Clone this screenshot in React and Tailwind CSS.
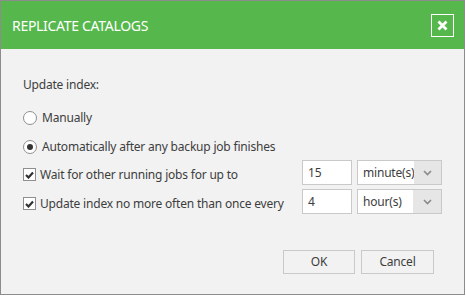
import React from "react";

function Radio({ checked }) {
  return (
    <span className="w-[14px] h-[14px] rounded-full border border-[#8f8f8f] bg-white flex items-center justify-center shrink-0">
      {checked && <span className="w-[6px] h-[6px] rounded-full bg-[#333]" />}
    </span>
  );
}

function Check() {
  return (
    <span className="w-[13px] h-[13px] border border-[#8f8f8f] bg-white flex items-center justify-center shrink-0">
      <svg width="9" height="8" viewBox="0 0 9 8">
        <path d="M1 4 L3.5 6.5 L8 1.5" fill="none" stroke="#333" strokeWidth="2.2" />
      </svg>
    </span>
  );
}

function Select({ value }) {
  return (
    <div className="w-[85px] h-[25px] border border-[#c9c9c9] bg-white flex">
      <div className="flex-1 pl-[5px] flex items-center">{value}</div>
      <div className="w-[28px] bg-[#e6e6e6] flex items-center justify-center">
        <svg width="9" height="6" viewBox="0 0 9 6">
          <path d="M1 1 L4.5 4.5 L8 1" fill="none" stroke="#8a8a8a" strokeWidth="1.6" />
        </svg>
      </div>
    </div>
  );
}

export default function App() {
  return (
    <div className="w-[466px] h-[296px] bg-white" style={{ fontFamily: '"Noto Sans", sans-serif' }}>
      <div className="w-[465px] h-[295px] border border-[#8c8c8c] bg-[#f2f2f2] flex flex-col text-[12px] tracking-[-0.2px] text-[#3d3d3d]">
        <div className="h-[48px] bg-[#55b74c] flex items-center justify-between pl-[11px] pr-[10px]">
          <span className="text-white text-[14px] tracking-[-0.3px] pt-[1px]">REPLICATE CATALOGS</span>
          <div className="w-[23px] h-[23px] border-[1.5px] border-white flex items-center justify-center">
            <svg width="11" height="11" viewBox="0 0 11 11">
              <path d="M1.5 1.5 L9.5 9.5 M9.5 1.5 L1.5 9.5" stroke="white" strokeWidth="2.8" />
            </svg>
          </div>
        </div>
        <div className="flex-1 flex flex-col pl-[22px]">
          <div className="mt-[26px] h-[20px] flex items-center">Update index:</div>
          <div className="mt-[14px] h-[18px] flex items-center gap-[5px]">
            <Radio />
            <span>Manually</span>
          </div>
          <div className="mt-[11px] h-[18px] flex items-center gap-[5px]">
            <Radio checked />
            <span>Automatically after any backup job finishes</span>
          </div>
          <div className="mt-[4px] flex items-center">
            <div className="w-[279px] pt-[4px] flex items-center gap-[4px]">
              <Check />
              <span>Wait for other running jobs for up to</span>
            </div>
            <div className="w-[50px] h-[25px] border border-[#c9c9c9] bg-white flex items-center pl-[5px]">15</div>
            <div className="ml-[5px]"><Select value="minute(s)" /></div>
          </div>
          <div className="mt-[4px] flex items-center">
            <div className="w-[279px] pt-[4px] flex items-center gap-[4px]">
              <Check />
              <span>Update index no more often than once every</span>
            </div>
            <div className="w-[50px] h-[25px] border border-[#c9c9c9] bg-white flex items-center pl-[5px]">4</div>
            <div className="ml-[5px]"><Select value="hour(s)" /></div>
          </div>
          <div className="mt-[36px] flex justify-end gap-[6px] pr-[30px]">
            <div className="w-[72px] h-[24px] border border-[#c9c9c9] flex items-center justify-center">OK</div>
            <div className="w-[73px] h-[24px] border border-[#c9c9c9] flex items-center justify-center">Cancel</div>
          </div>
        </div>
      </div>
    </div>
  );
}
